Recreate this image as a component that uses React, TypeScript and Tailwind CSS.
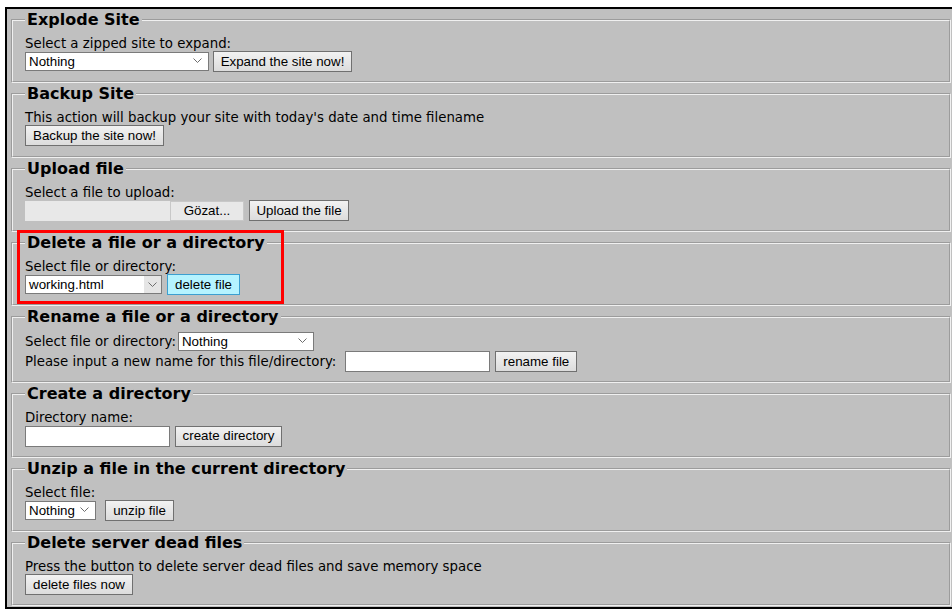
import type { ReactNode } from 'react'

const chevron = (
  <svg width="9" height="5" viewBox="0 0 9 5" className="block">
    <polyline points="0.5,0.5 4.5,4.5 8.5,0.5" fill="none" stroke="#6d6d6d" strokeWidth="1" />
  </svg>
)

function Select({ value, width, hot }: { value: string; width: string; hot?: boolean }) {
  return (
    <div className={`relative flex h-[19px] items-center border border-[#7a7a7a] bg-white ${width}`}>
      <span className="pl-[3px] font-['Liberation_Sans',Arial,sans-serif] text-[13.33px] leading-none text-black">
        {value}
      </span>
      {hot ? (
        <div className="absolute right-0 top-0 flex h-full w-[17px] items-center justify-center bg-[#e5e5e5]">
          {chevron}
        </div>
      ) : (
        <div className="absolute right-[6px] top-[5px]">{chevron}</div>
      )}
    </div>
  )
}

function Btn({ children, width, hot }: { children: ReactNode; width: string; hot?: boolean }) {
  return (
    <button
      className={`flex h-[21px] items-center justify-center border font-['Liberation_Sans',Arial,sans-serif] text-[13.33px] leading-none text-black ${width} ${
        hot
          ? 'border-[#3c9fd0] bg-[#b5f3ff]'
          : 'border-[#707070] bg-gradient-to-b from-[#f2f2f2] to-[#dcdcdc]'
      }`}
    >
      {children}
    </button>
  )
}

function TextBox({ width }: { width: string }) {
  return <div className={`h-[21px] border border-[#7a7a7a] bg-white ${width}`} />
}

function Box({ title, children }: { title: string; children: ReactNode }) {
  return (
    <fieldset className="min-w-0 border-2 border-[#f0f0f0] px-[12px] pt-[5px] pb-[9px] [border-style:groove]">
      <legend className="px-[2px] text-[16px] font-bold leading-[20px] text-black">{title}</legend>
      {children}
    </fieldset>
  )
}

function Label({ children }: { children: ReactNode }) {
  return <div className="h-[16px] text-[13.33px] leading-[17px] text-black">{children}</div>
}

export default function App() {
  return (
    <div className="relative h-[614px] overflow-hidden bg-white pt-[7px] font-['DejaVu_Sans',Verdana,sans-serif]">
      <div className="ml-[5px] flex w-[952px] flex-col gap-px border-2 border-black bg-[#c0c0c0] px-[4px] py-px">
        <Box title="Explode Site">
          <Label>Select a zipped site to expand:</Label>
          <div className="flex h-[21px] items-center gap-[4px]">
            <Select value="Nothing" width="w-[184px]" />
            <Btn width="w-[139px]">Expand the site now!</Btn>
          </div>
        </Box>

        <Box title="Backup Site">
          <Label>This action will backup your site with today's date and time filename</Label>
          <div className="flex h-[22px] items-start">
            <Btn width="w-[139px]">Backup the site now!</Btn>
          </div>
        </Box>

        <Box title="Upload file">
          <Label>Select a file to upload:</Label>
          <div className="flex h-[21px] items-center gap-[5px]">
            <div className="flex h-[20px]">
              <div className="w-[145px] bg-[#e8e8e8]" />
              <div className="flex w-[74px] items-center justify-center border border-[#c8c8c8] bg-[#e8e8e8] font-['Liberation_Sans',Arial,sans-serif] text-[13.33px] text-black">
                Gözat...
              </div>
            </div>
            <Btn width="w-[100px]">Upload the file</Btn>
          </div>
        </Box>

        <Box title="Delete a file or a directory">
          <Label>Select file or directory:</Label>
          <div className="flex h-[21px] items-center gap-[5px]">
            <Select value="working.html" width="w-[137px]" hot />
            <Btn width="w-[73px]" hot>
              delete file
            </Btn>
          </div>
        </Box>

        <Box title="Rename a file or a directory">
          <div className="flex h-[19px] items-center">
            <span className="text-[13.33px] leading-[16px] text-black">Select file or directory:</span>
            <div className="ml-[2px]">
              <Select value="Nothing" width="w-[136px]" />
            </div>
          </div>
          <div className="flex h-[21px] items-center">
            <span className="text-[13.33px] leading-[16px] text-black">
              Please input a new name for this file/directory:
            </span>
            <div className="ml-[9px] flex items-center gap-[5px]">
              <TextBox width="w-[145px]" />
              <Btn width="w-[82px]">rename file</Btn>
            </div>
          </div>
        </Box>

        <Box title="Create a directory">
          <Label>Directory name:</Label>
          <div className="flex h-[22px] items-center gap-[5px]">
            <TextBox width="w-[145px]" />
            <Btn width="w-[107px]">create directory</Btn>
          </div>
        </Box>

        <Box title="Unzip a file in the current directory">
          <Label>Select file:</Label>
          <div className="flex h-[21px] items-center gap-[9px]">
            <Select value="Nothing" width="w-[71px]" />
            <Btn width="w-[69px]">unzip file</Btn>
          </div>
        </Box>

        <Box title="Delete server dead files">
          <Label>Press the button to delete server dead files and save memory space</Label>
          <div className="flex h-[21px] items-center">
            <Btn width="w-[108px]">delete files now</Btn>
          </div>
        </Box>
      </div>

      {/* red annotation box */}
      <div className="pointer-events-none absolute left-[17px] top-[230px] h-[74px] w-[267px] border-[3px] border-[#ff0000]" />
    </div>
  )
}
